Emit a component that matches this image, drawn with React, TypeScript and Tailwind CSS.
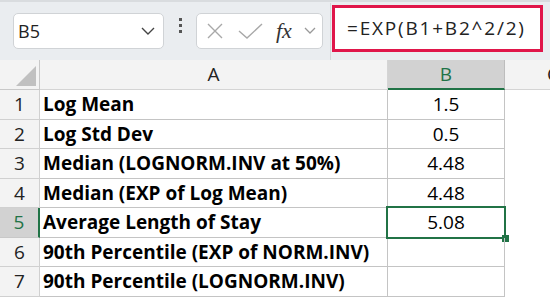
import React from "react";

const font = { fontFamily: '"Open Sans", "Noto Sans", sans-serif' };

const rows: { n: number; a: string; b: string }[] = [
  { n: 1, a: "Log Mean", b: "1.5" },
  { n: 2, a: "Log Std Dev", b: "0.5" },
  { n: 3, a: "Median (LOGNORM.INV at 50%)", b: "4.48" },
  { n: 4, a: "Median (EXP of Log Mean)", b: "4.48" },
  { n: 5, a: "Average Length of Stay", b: "5.08" },
  { n: 6, a: "90th Percentile (EXP of NORM.INV)", b: "" },
  { n: 7, a: "90th Percentile (LOGNORM.INV)", b: "" },
];

function Chevron() {
  return (
    <svg width="14" height="8" viewBox="0 0 14 8" fill="none">
      <path d="M1 1 L7 7 L13 1" stroke="#444" strokeWidth="1.4" />
    </svg>
  );
}

export default function App() {
  return (
    <div className="w-[550px] h-[298px] overflow-hidden bg-white text-black" style={font}>
      {/* toolbar */}
      <div className="relative h-[60px] bg-[#eaedf0] border-t-[2px] border-[#d9dcdf] flex items-start">
        <div className="shrink-0 ml-[13px] mt-[11px] w-[151px] h-[36px] bg-white border border-[#d0d3d6] rounded-[5px] flex items-center justify-between pl-[4px] pr-[8px]">
          <span className="text-[18px] leading-none text-[#222]">B5</span>
          <Chevron />
        </div>
        <div className="shrink-0 w-[32px] h-[47px] flex flex-col items-center justify-center gap-[3px]">
          <div className="w-[3px] h-[3px] bg-[#555]" />
          <div className="w-[3px] h-[3px] bg-[#555]" />
          <div className="w-[3px] h-[3px] bg-[#555]" />
        </div>
        <div className="shrink-0 mt-[11px] w-[127px] h-[36px] bg-white border border-[#d0d3d6] rounded-[5px] flex items-center pl-[9px] pr-[6px]">
          <svg width="18" height="18" viewBox="0 0 18 18">
            <path d="M2 2 L16 16 M16 2 L2 16" stroke="#a8a8a8" strokeWidth="1.4" />
          </svg>
          <svg width="26" height="18" viewBox="0 0 26 18" className="ml-[14px]">
            <path d="M1 9 L9 16 L24 2" stroke="#a8a8a8" strokeWidth="1.4" fill="none" />
          </svg>
          <span
            className="ml-[12px] text-[22px] italic leading-none text-[#333]"
            style={{ fontFamily: '"Liberation Serif", serif' }}
          >
            fx
          </span>
          <span className="ml-auto">
            <svg width="12" height="8" viewBox="0 0 12 8" fill="none">
              <path d="M1 1 L6 6 L11 1" stroke="#999" strokeWidth="1.3" />
            </svg>
          </span>
        </div>
        <div className="shrink-0 ml-[7px] mt-[1px] w-[1px] h-[57px] bg-[#d4d7da]" />
        <div className="shrink-0 ml-[1px] mt-[3px] w-[211px] h-[47px] bg-white border-[3px] border-[#e0164a] flex items-center pl-[12px]">
          <span className="text-[19px] leading-none tracking-[1.8px] text-[#222] whitespace-nowrap">=EXP(B1+B2^2/2)</span>
        </div>
      </div>

      {/* header row */}
      <div className="flex h-[30px]">
        <div className="relative shrink-0 w-[40px] bg-[#f3f3f3] border-r border-b border-[#c8c8c8]">
          <svg width="20" height="20" viewBox="0 0 20 20" className="absolute right-[3px] bottom-[3px]">
            <path d="M20 0 L20 20 L0 20 Z" fill="#c0c0c0" />
          </svg>
        </div>
        <div className="shrink-0 w-[348px] bg-[#f3f3f3] border-r border-b border-[#d4d4d4] flex items-center justify-center text-[19px] text-[#222]">
          A
        </div>
        <div className="shrink-0 w-[117px] bg-[#d2d2d2] border-r border-[#bdbdbd] border-b-[2px] border-b-[#217346] flex items-center justify-center text-[19px] text-[#217346]">
          B
        </div>
        <div className="flex-1 min-w-0 overflow-hidden bg-[#f3f3f3] border-b border-[#d4d4d4] flex items-center pl-[42px] text-[19px] text-[#222] whitespace-nowrap">
          C
        </div>
      </div>

      {rows.map((r) => {
        const sel = r.n === 5;
        return (
          <div key={r.n} className="flex h-[29.5px]">
            <div
              className={
                sel
                  ? "shrink-0 w-[40px] bg-[#d2d2d2] border-r-[2px] border-r-[#217346] border-b border-b-[#c8c8c8] flex items-center justify-center text-[19px] text-[#217346]"
                  : "shrink-0 w-[40px] bg-[#f3f3f3] border-r border-b border-[#d0d0d0] flex items-center justify-center text-[19px] text-[#222]"
              }
            >
              {r.n}
            </div>
            <div className="shrink-0 w-[348px] border-r border-b border-[#c4c4c4] flex items-center pl-[3px] text-[19px] font-bold whitespace-nowrap">
              {r.a}
            </div>
            <div className="relative shrink-0 w-[117px] border-r border-b border-[#c4c4c4] flex items-center justify-center text-[19px]">
              {r.b}
              {sel && (
                <>
                  <div className="absolute left-[-2px] top-[-2px] right-[-2px] bottom-[-2px] border-[2px] border-[#217346]" />
                  <div className="absolute right-[-5px] bottom-[-5px] w-[7px] h-[7px] bg-[#217346]" />
                </>
              )}
            </div>
            <div className="flex-1 min-w-0" />
          </div>
        );
      })}
    </div>
  );
}
